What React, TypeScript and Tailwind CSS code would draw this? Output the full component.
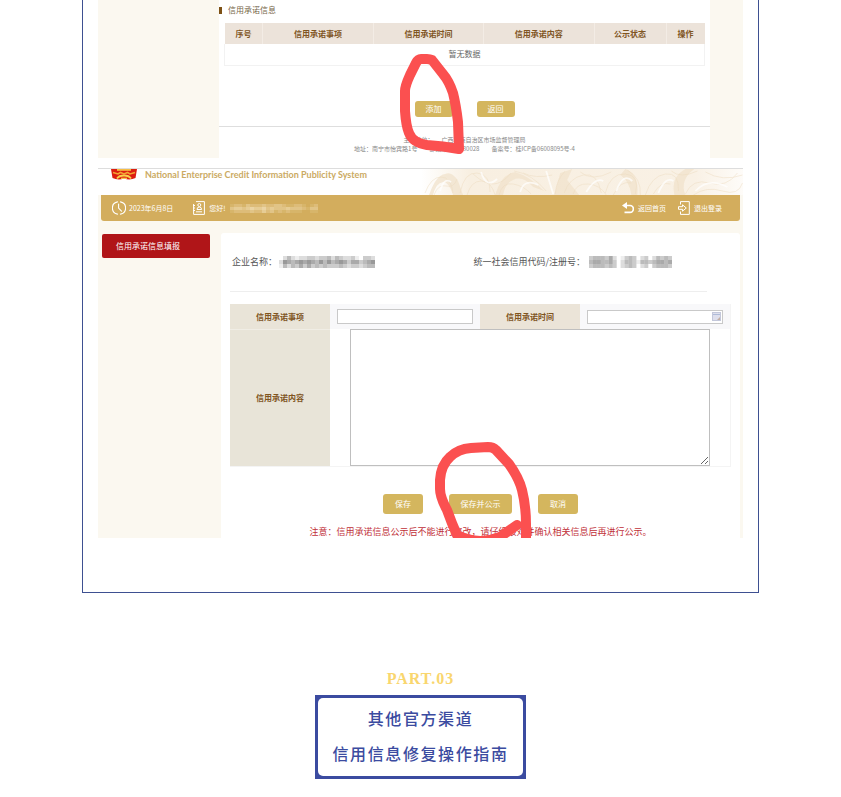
import type { ReactNode } from "react";

const commitmentColumns = [
  { label: "序号", width: "w-[8%]" },
  { label: "信用承诺事项", width: "w-[23%]" },
  { label: "信用承诺时间", width: "w-[23%]" },
  { label: "信用承诺内容", width: "w-[23%]" },
  { label: "公示状态", width: "w-[15%]" },
  { label: "操作", width: "w-[8%]" },
];

// Redacted values are shown as rows of coarse tiles; each digit is a tile's darkness.
const companyTiles = [
  "024212233233424322310332",
  "265456565464645653553456",
  "142435353434333432332344",
];
const codeTiles = [
  "344435201343023024343",
  "455445302443144345545",
  "344434302343023034443",
];
const userTiles = ["1221322232233211221012", "3443454453433343332133", "1222232242312121110011"];

function Mosaic({ rows, fill, className, label }: { rows: string[]; fill: string; className: string; label: string }) {
  return (
    <svg
      role="img"
      aria-label={label}
      className={className}
      viewBox={`0 0 ${rows[0].length * 4} ${rows.length * 4}`}
      preserveAspectRatio="none"
    >
      {rows.map((row, y) =>
        row.split("").map((shade, x) => (
          <rect key={`${x}-${y}`} x={x * 4} y={y * 4} width="4" height="4" fill={fill} opacity={Number(shade) / 9} />
        )),
      )}
    </svg>
  );
}

function GoldButton({ children, wide = "w-[40px]", height = "h-5" }: { children: ReactNode; wide?: string; height?: string }) {
  return (
    <button type="button" className={`${wide} ${height} flex items-center justify-center rounded-[3px] bg-[#d4b65e] text-[8px] text-white`}>
      {children}
    </button>
  );
}

function Emblem() {
  return (
    <svg className="h-[11px] w-[26px]" viewBox="0 0 26 11" aria-hidden="true">
      <path d="M0 0H26L24.500 9Q19 11.500 13 9.500Q7 11.500 1.500 9Z" fill="#dc1d10" />
      <path d="M6 0H20V1.800H6Z" fill="#f7bd45" />
      <path d="M2 3.500L7 5L9.500 3.500L13 5L16.500 3.500L19 5L24 3.500" fill="none" stroke="#f3a533" strokeWidth="1.600" />
      <path d="M6 9.500Q8 6.500 13 6.500T20 9.500" fill="none" stroke="#f8cf4b" strokeWidth="1.800" />
      <path d="M10 9.300H16" stroke="#f8cf4b" strokeWidth="1.200" />
    </svg>
  );
}

function Landscape() {
  return (
    <svg className="h-[26px] w-1/2" viewBox="0 0 322 26" preserveAspectRatio="none" aria-hidden="true">
      <defs>
        <linearGradient id="haze" x1="0" x2="1">
          <stop offset="0" stopColor="#f8efe1" stopOpacity="0" />
          <stop offset="0.150" stopColor="#f8efe1" />
          <stop offset="0.850" stopColor="#f9f1e5" />
          <stop offset="1" stopColor="#fefcf9" />
        </linearGradient>
      </defs>
      <rect width="322" height="26" fill="url(#haze)" />
      <g fill="#f1e2cb" opacity="0.700">
        <path d="M8 26Q15 6 24 5Q31 2 37 12L42 26H32Q28 13 22 13Q15 14 12 26Z" />
        <path d="M74 26Q80 5 94 3Q108 7 123 22L112 18Q101 6 92 11Q84 14 82 26Z" />
        <path d="M133 26L139 4L151 0L146 11L158 26Z" />
        <path d="M204 0Q218 5 216 26H210Q208 12 199 6ZM253 26Q249 8 264 0H273Q258 11 264 26Z" />
      </g>
      <g fill="none" stroke="#ecdabf" strokeWidth="0.800" opacity="0.600">
        <path d="M4 24Q10 8 20 8T32 24M13 26Q17 15 25 17T36 10M39 24Q43 3 56 4T69 23M46 26Q50 12 60 12T74 26" />
        <path d="M52 5Q63 15 72 15T90 4M78 26Q81 13 92 15T110 25M93 2Q111 5 125 22M102 4Q114 10 131 6" />
        <path d="M134 25Q135 11 144 2M143 24Q148 9 162 6T180 24M152 25Q155 14 167 15T185 26M159 3Q171 13 190 3" />
        <path d="M184 24Q189 4 204 5T214 25M192 26Q199 11 210 14M206 1Q220 9 219 26M224 26Q230 7 244 5T257 22" />
        <path d="M232 25Q239 12 249 15M250 2Q259 10 276 2M264 25Q271 9 288 14T316 4M272 26Q285 17 301 22T321 14M284 3Q301 13 321 6" />
      </g>
      <g fill="none" stroke="#ffffff" strokeWidth="1.800" opacity="0.700">
        <path d="M19 22Q23 8 30 13M60 3Q65 20 76 10M99 23Q103 9 117 16M125 2L132 25M165 23Q174 8 182 12M195 22Q202 3 211 12M237 24Q244 7 252 12M274 22Q287 8 306 18" />
      </g>
    </svg>
  );
}

function ClockIcon() {
  return (
    <svg className="size-[14px]" viewBox="0 0 14 14" fill="none" stroke="white" strokeWidth="1.100" strokeLinecap="round" aria-hidden="true">
      <path d="M5.500 .900A6.200 6.200 0 0 0 5.500 13.100M8.500 .900A6.200 6.200 0 0 1 8.500 13.100M6.600 3V7L9.500 10.200" />
    </svg>
  );
}

function BadgeIcon() {
  return (
    <svg className="h-[14px] w-[12px]" viewBox="0 0 12 14" fill="none" stroke="white" strokeWidth="1" aria-hidden="true">
      <path d="M3 .600H11.400V13.400H.600V3" />
      <circle cx="6.300" cy="4" r="1.500" />
      <path d="M4 8.500Q4 6 6.300 6T8.600 8.500ZM3 10.800H9M0 4.500H2M0 7H2M0 9.500H2" />
    </svg>
  );
}

function ReplyIcon() {
  return (
    <svg className="h-[12px] w-[12px]" viewBox="0 0 12 12" fill="none" aria-hidden="true">
      <path d="M5 0V7L0 3.500Z" fill="white" />
      <path d="M3 3.500H8A3.300 3.300 0 0 1 8 10.300H2.500" stroke="white" strokeWidth="1.700" />
    </svg>
  );
}

function ExitIcon() {
  return (
    <svg className="h-[14px] w-[12px]" viewBox="0 0 12 14" fill="none" stroke="white" strokeWidth="1" aria-hidden="true">
      <path d="M2.500 3.500V.600H11.300V13.400H2.500V10.500" />
      <path d="M.500 5.700H4.500V3.800L8.300 7L4.500 10.200V8.300H.500Z" />
    </svg>
  );
}

function CommitmentList() {
  return (
    <section className="relative flex h-[158px] overflow-hidden bg-[#fbf8f0]">
      <div className="w-[121px] shrink-0" />
      <div className="min-w-0 flex-1 bg-white">
        <h2 className="mb-[3px] flex h-5 items-center gap-[6px] text-[8px] text-[#77664a]">
          <span className="h-[7px] w-[3px] bg-[#7d5115]" />
          信用承诺信息
        </h2>
        <div className="px-[5px]">
          <table className="w-full table-fixed border-collapse text-[8px] leading-[10px]">
            <thead>
              <tr className="h-[21px] bg-[#ece3da] text-[#80551f]">
                {commitmentColumns.map((column) => (
                  <th key={column.label} className={`${column.width} border-r border-[#f3ece5] p-0 font-bold last:border-r-0`}>
                    {column.label}
                  </th>
                ))}
              </tr>
            </thead>
            <tbody>
              <tr className="h-[21px] text-[#666666]">
                <td colSpan={6} className="border border-t-0 border-[#f2f2f2] p-0 text-center">
                  暂无数据
                </td>
              </tr>
            </tbody>
          </table>
        </div>
        <div className="mt-[35px] flex justify-center gap-6">
          <GoldButton wide="w-[38px]" height="h-4">添加</GoldButton>
          <GoldButton wide="w-[38px]" height="h-4">返回</GoldButton>
        </div>
        <footer className="mt-[9px] border-t border-[#dedede] pt-2 text-[6px] leading-[9px] text-[#888888]">
          <p className="flex justify-center gap-2">
            <span>主办单位：</span>
            <span>广西壮族自治区市场监督管理局</span>
          </p>
          <p className="flex justify-center gap-3">
            <span>地址：南宁市怡宾路1号</span>
            <span>邮政编码：530028</span>
            <span>备案号：桂ICP备06008095号-4</span>
          </p>
        </footer>
      </div>
      <div className="w-[33px] shrink-0" />
      <svg className="pointer-events-none absolute inset-0 size-full" viewBox="98 0 645 158" fill="none" aria-hidden="true">
        <path
          d="M459 149L458 122Q456 105 453 93Q449 81 443 74L432 60Q430 59 427 59H421Q418 59 416 63L410 75Q405 86 405 91V111Q406 126 409 133Q413 143 427 145Q443 146 459 149Z"
          stroke="#fb5050"
          strokeWidth="10"
          strokeLinejoin="round"
        />
      </svg>
    </section>
  );
}

function CommitmentForm() {
  return (
    <section className="relative mt-[10px] h-[370px] overflow-hidden bg-[#fbf8f0]">
      <header className="flex h-[27px] items-start justify-between border-t border-[#dddddd] bg-white">
        <div className="flex shrink-0 items-start gap-2 pl-[13px]">
          <Emblem />
          <p className="font-['Liberation_Sans_Narrow',Lato,sans-serif] text-[9px] leading-[12px] font-bold text-[#cbaa62]">
            National Enterprise Credit Information Publicity System
          </p>
        </div>
        <Landscape />
      </header>
      <div className="mx-[3px] flex h-[26px] items-center rounded-b-[3px] bg-[#d3ad5d] pr-[18px] pl-[11px] text-[7px] leading-[10px] text-white">
        <ClockIcon />
        <time className="ml-[3px]" dateTime="2023-06-08">2023年6月8日</time>
        <span className="ml-5"><BadgeIcon /></span>
        <span className="ml-1">您好!</span>
        <Mosaic rows={userTiles} fill="#fff3dc" className="ml-1 h-[9px] w-[88px] blur-[0.5px]" label="用户名" />
        <a href="#home" className="ml-auto flex items-center gap-1"><ReplyIcon />返回首页</a>
        <a href="#exit" className="ml-3 flex items-center gap-1"><ExitIcon />退出登录</a>
      </div>
      <div className="mt-3 flex">
        <nav className="w-[123px] shrink-0 pt-px pr-[11px] pl-1">
          <a href="#commitment" className="flex h-6 items-center rounded-[2px] bg-[#b01518] pl-[14px] text-[8px] text-white">
            信用承诺信息填报
          </a>
        </nav>
        <form className="mr-[3px] min-w-0 flex-1 rounded-t-[3px] bg-white" onSubmit={(event) => event.preventDefault()}>
          <dl className="mr-[33px] ml-[9px] flex h-[59px] items-center border-b border-[#eeeeee] pl-[2px] text-[9px] text-[#555555]">
            <div className="flex w-1/2 items-center gap-[2px]">
              <dt>企业名称：</dt>
              <dd><Mosaic rows={companyTiles} fill="#666666" className="h-3 w-24 blur-[0.5px]" label="企业名称" /></dd>
            </div>
            <div className="flex items-center gap-1 pl-1">
              <dt>统一社会信用代码/注册号：</dt>
              <dd><Mosaic rows={codeTiles} fill="#666666" className="h-3 w-[83px] blur-[0.5px]" label="注册号" /></dd>
            </div>
          </dl>
          <div className="mt-3 mr-[9px] ml-[9px] border border-[#f4f4f4] border-t-0 border-l-0 text-[8px] font-bold text-[#80551f]">
            <div className="grid h-[25px] grid-cols-[2fr_3fr_2fr_3fr] bg-[#f8f8fa]">
              <label htmlFor="item" className="flex items-center justify-center bg-[#e9e4d8]">信用承诺事项</label>
              <div className="flex items-center px-[7px]">
                <input id="item" type="text" className="h-[15px] w-full min-w-0 border border-[#c9c9c9] bg-white" />
              </div>
              <label htmlFor="date" className="flex items-center justify-center bg-[#ebe4d8]">信用承诺时间</label>
              <div className="relative flex items-center px-[7px]">
                <input id="date" type="text" className="h-[14px] w-full min-w-0 border border-[#c9c9c9] bg-white" />
                <svg className="pointer-events-none absolute right-[9px] size-[9px]" viewBox="0 0 9 9" aria-hidden="true">
                  <rect x=".500" y=".500" width="8" height="8" fill="#dedfec" stroke="#c3c7da" />
                  <path d="M1 2.500H8" stroke="#aebbd8" />
                  <path d="M5 8L8 5V8Z" fill="#c2aea2" />
                </svg>
              </div>
            </div>
            <div className="grid h-[137px] grid-cols-[1fr_4fr]">
              <label htmlFor="content" className="flex items-center justify-center border-t border-[#f0ede5] bg-[#e8e4d8]">信用承诺内容</label>
              <div className="pr-5 pl-5">
                <textarea id="content" className="block size-full resize border border-[#bfbfbf] bg-white" />
              </div>
            </div>
          </div>
          <div className="mt-[27px] flex justify-center gap-[26px]">
            <GoldButton>保存</GoldButton>
            <GoldButton wide="w-[63px]">保存并公示</GoldButton>
            <GoldButton>取消</GoldButton>
          </div>
          <p className="mt-3 text-center text-[9px] leading-3 whitespace-nowrap text-[#bf3038]">
            注意：信用承诺信息公示后不能进行修改，请仔细核对并确认相关信息后再进行公示。
          </p>
        </form>
      </div>
      <svg className="pointer-events-none absolute inset-0 size-full" viewBox="98 168 645 370" fill="none" aria-hidden="true">
        <path
          d="M517 525L500 537Q478 546 457 535Q452 524 447 510Q440 497 440 489V480Q441 465 450 457Q458 449 471 448L488 447Q493 447 496 450L509 464Q519 478 522 490Q526 506 526 524V545"
          stroke="#fb5050"
          strokeWidth="10"
          strokeLinecap="round"
          strokeLinejoin="round"
        />
      </svg>
    </section>
  );
}

export default function App() {
  return (
    <main className="bg-white font-['Noto_Sans_CJK_SC',sans-serif]">
      <article className="mx-auto w-full max-w-[677px] border-x border-b border-[#3e5091] px-[15px] pb-[54px]">
        <CommitmentList />
        <CommitmentForm />
      </article>
      <section className="mt-[70px] flex flex-col items-center text-base">
        <p className="font-['Liberation_Serif',serif] leading-8 font-bold tracking-[1px] text-[#f9d66e]">PART.03</p>
        <div className="bg-[#3b4ba0] p-[3px]">
          <h2 className="rounded-[5px] bg-white px-[14px] pt-[3px] pb-[5px] text-center leading-[35px] font-medium tracking-widest text-[#3b4ba0]">
            其他官方渠道
            <br />
            信用信息修复操作指南
          </h2>
        </div>
      </section>
    </main>
  );
}
